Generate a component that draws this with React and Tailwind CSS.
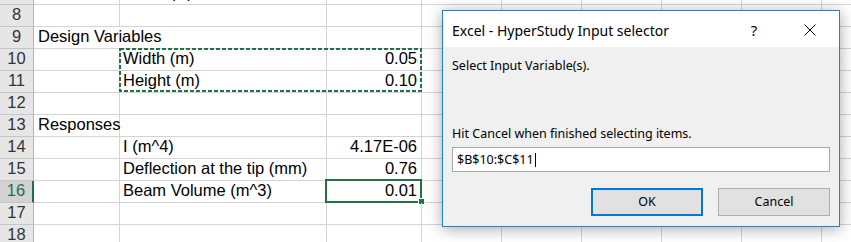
import React from 'react';

const SHEET_FONT = { fontFamily: '"Liberation Sans", Arial, sans-serif' };
const UI_FONT = { fontFamily: '"Noto Sans", "Open Sans", sans-serif' };

// sheet rows: [rowNumber, colA, colB, colC]
const ROWS = [
  [7, '', 'Force (N)', ''],
  [8, '', '', ''],
  [9, 'Design Variables', '', ''],
  [10, '', 'Width (m)', '0.05'],
  [11, '', 'Height (m)', '0.10'],
  [12, '', '', ''],
  [13, 'Responses', '', ''],
  [14, '', 'I (m^4)', '4.17E-06'],
  [15, '', 'Deflection at the tip (mm)', '0.76'],
  [16, '', 'Beam Volume (m^3)', '0.01'],
  [17, '', '', ''],
  [18, '', '', ''],
];

const EXTRA_COLS = [0, 1, 2, 3, 4, 5];

function SheetRow({ num, a, b, c }) {
  const active = num === 16;
  const spill = a.length > 10; // text that runs over into column B hides the gridline

  return (
    <div className="flex h-[22px] shrink-0">
      {/* row header */}
      <div
        className={
          active
            ? 'w-[34px] shrink-0 flex items-end justify-center pb-[3px] border-b border-[#c6c6c6] border-r-2 border-r-[#217346] bg-[#d2d2d2] text-[#217346] text-[16.5px] leading-[18px]'
            : 'w-[34px] shrink-0 flex items-end justify-center pb-[3px] border-b border-[#c6c6c6] border-r border-r-[#b4b4b4] bg-[#e6e6e6] text-[#333] text-[16.5px] leading-[18px]'
        }
      >
        {num}
      </div>

      {/* A */}
      <div
        className={
          spill
            ? 'w-[86px] shrink-0 flex items-end pl-[4px] pb-[3px] border-b border-[#d4d4d4] text-[16.5px] leading-[18px] whitespace-nowrap overflow-visible relative z-10'
            : 'w-[86px] shrink-0 flex items-end pl-[4px] pb-[3px] border-b border-r border-[#d4d4d4] text-[16.5px] leading-[18px] whitespace-nowrap'
        }
      >
        {a}
      </div>

      {/* B */}
      <div className="w-[207px] shrink-0 flex items-end pl-[3px] pb-[3px] border-b border-r border-[#d4d4d4] text-[16.5px] leading-[18px] whitespace-nowrap relative">
        {b}
        {num === 10 && (
          <svg className="absolute -left-[1px] -top-[1px] z-20" width="303" height="44">
            <rect x="1" y="1" width="301" height="42" fill="none" stroke="#217346" strokeWidth="2" strokeDasharray="4 2" />
          </svg>
        )}
      </div>

      {/* C */}
      <div className="w-[95px] shrink-0 flex items-end justify-end pr-[4px] pb-[3px] border-b border-r border-[#d4d4d4] text-[16.5px] leading-[18px] relative">
        {c}
        {active && (
          <>
            <div className="absolute -left-[2px] -top-[2px] w-[97px] h-[24px] border-2 border-[#217346]" />
            <div className="absolute left-[91px] top-[17px] w-[7px] h-[7px] bg-[#217346] border border-white" />
          </>
        )}
      </div>

      {EXTRA_COLS.map(i => (
        <div key={i} className="w-[80px] shrink-0 border-b border-r border-[#d4d4d4]" />
      ))}
    </div>
  );
}

function InputSelector() {
  return (
    <div
      className="absolute left-[442px] top-[10px] w-[398px] h-[217px] flex flex-col bg-[#f0f0f0] border border-[#1883d7] shadow-[0_2px_14px_rgba(0,0,0,0.35)] text-black"
      style={UI_FONT}
    >
      {/* title bar */}
      <div className="h-[36px] shrink-0 flex items-center bg-white pl-[9px] pt-[2px]">
        <span className="text-[14px] flex-1">Excel - HyperStudy Input selector</span>
        <span className="text-[15px] w-[12px] mr-[44px] text-center">?</span>
        <svg className="mr-[23px]" width="12" height="12" viewBox="0 0 12 12">
          <path d="M0.5 0.5 L11.5 11.5 M11.5 0.5 L0.5 11.5" stroke="#000" strokeWidth="1" fill="none" />
        </svg>
      </div>

      {/* body */}
      <div className="flex-1 flex flex-col px-[9px] pt-[11px] text-[12.5px] leading-[16px]">
        <p>Select Input Variable(s).</p>
        <p className="mt-[52px]">Hit Cancel when finished selecting items.</p>
        <div className="mt-[5px] h-[25px] flex items-center bg-white border border-[#a6a6a6] pl-[4px]">
          <span>$B$10:$C$11</span>
          <span className="ml-[1px] w-[1px] h-[14px] bg-black" />
        </div>
        <div className="mt-[16px] flex justify-end gap-[15px]">
          <button className="w-[112px] h-[28px] bg-[#e1e1e1] border-2 border-[#0078d7] text-[12.5px]">OK</button>
          <button className="w-[112px] h-[28px] bg-[#e1e1e1] border border-[#adadad] text-[12.5px]">Cancel</button>
        </div>
      </div>
    </div>
  );
}

export default function App() {
  return (
    <div className="relative w-[851px] h-[242px] overflow-hidden bg-white text-black" style={SHEET_FONT}>
      <div className="flex flex-col -mt-[17px]">
        {ROWS.map(([num, a, b, c]) => (
          <SheetRow key={num} num={num} a={a} b={b} c={c} />
        ))}
      </div>
      <InputSelector />
    </div>
  );
}
